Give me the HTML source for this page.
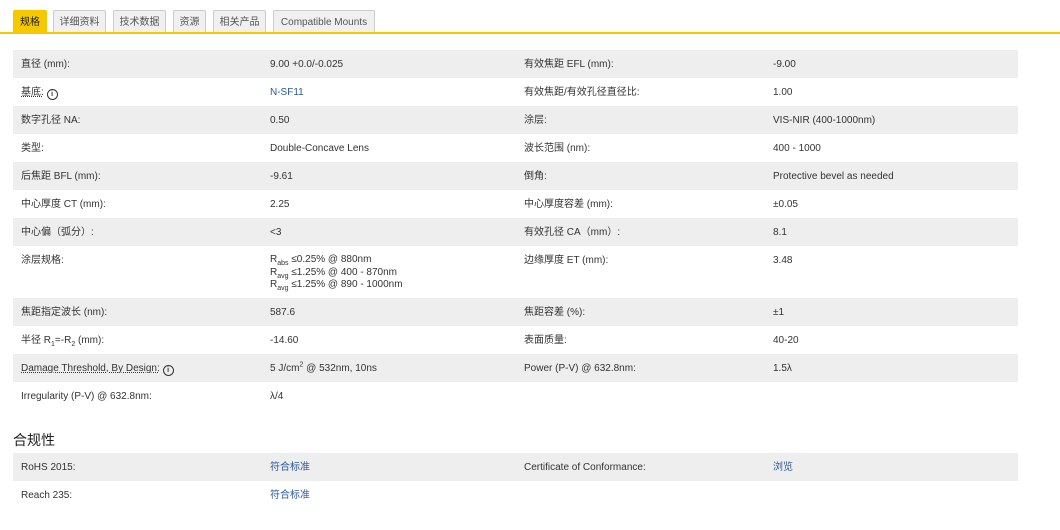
<!DOCTYPE html><html><head><meta charset="utf-8"><style>
body{margin:0;width:1060px;height:530px;background:#fff;font-family:"Liberation Sans","Noto Sans CJK SC",sans-serif;font-size:10px;color:#333;position:relative;overflow:hidden}
.tab{position:absolute;top:10px;height:22px;line-height:24px;font-size:10px;text-align:center;background:#f0f0f0;border:1px solid #ccc;border-bottom:none;color:#555;box-sizing:border-box;border-radius:2px 2px 0 0}
.line{position:absolute;left:0;top:32px;width:1060px;height:2px;background:#f5c800}
.r{position:absolute;left:13px;width:1005px;height:28px}
.g{background:#eee}
.c{position:absolute;top:1px;height:28px;line-height:28px;white-space:nowrap}
.a{left:8px}.b{left:257px}.d{left:511px}.e{left:760px}
a{color:#2a5a9a;text-decoration:none}
sub,sup{font-size:7px;line-height:0}
.i{display:inline-block;width:9px;height:9px;border:1.3px solid #333;border-radius:50%;font-size:7px;line-height:9px;text-align:center;font-weight:bold;vertical-align:-1px}
h2{position:absolute;left:13px;top:431px;margin:0;font-size:14px;font-weight:normal;color:#222;line-height:18px}
</style></head><body>
<div class="tab" style="left:13px;width:34px;background:#f5c800;border-color:#f5c800;color:#222">规格</div>
<div class="tab" style="left:53px;width:53px">详细资料</div>
<div class="tab" style="left:113px;width:53px">技术数据</div>
<div class="tab" style="left:173px;width:33px">资源</div>
<div class="tab" style="left:213px;width:53px">相关产品</div>
<div class="tab" style="left:273px;width:102px">Compatible Mounts</div>
<div class="line"></div>
<div class="r g" style="top:50px"><span class="c a">直径 (mm):</span><span class="c b">9.00 +0.0/-0.025</span><span class="c d">有效焦距 EFL (mm):</span><span class="c e">-9.00</span></div>
<div class="r" style="top:78px"><span class="c a"><u style="text-decoration-style:dotted">基底:</u> <span class="i">i</span></span><span class="c b"><a>N-SF11</a></span><span class="c d">有效焦距/有效孔径直径比:</span><span class="c e">1.00</span></div>
<div class="r g" style="top:106px"><span class="c a">数字孔径 NA:</span><span class="c b">0.50</span><span class="c d">涂层:</span><span class="c e">VIS-NIR (400-1000nm)</span></div>
<div class="r" style="top:134px"><span class="c a">类型:</span><span class="c b">Double-Concave Lens</span><span class="c d">波长范围 (nm):</span><span class="c e">400 - 1000</span></div>
<div class="r g" style="top:162px"><span class="c a">后焦距 BFL (mm):</span><span class="c b">-9.61</span><span class="c d">倒角:</span><span class="c e">Protective bevel as needed</span></div>
<div class="r" style="top:190px"><span class="c a">中心厚度 CT (mm):</span><span class="c b">2.25</span><span class="c d">中心厚度容差 (mm):</span><span class="c e">±0.05</span></div>
<div class="r g" style="top:218px"><span class="c a">中心偏（弧分）:</span><span class="c b">&lt;3</span><span class="c d">有效孔径 CA（mm）:</span><span class="c e">8.1</span></div>
<div class="r" style="top:246px;height:52px"><span class="c a">涂层规格:</span><span class="c b" style="line-height:12.5px;top:8px;height:auto">R<sub>abs</sub> ≤0.25% @ 880nm<br>R<sub>avg</sub> ≤1.25% @ 400 - 870nm<br>R<sub>avg</sub> ≤1.25% @ 890 - 1000nm</span><span class="c d">边缘厚度 ET (mm):</span><span class="c e">3.48</span></div>
<div class="r g" style="top:298px"><span class="c a">焦距指定波长 (nm):</span><span class="c b">587.6</span><span class="c d">焦距容差 (%):</span><span class="c e">±1</span></div>
<div class="r" style="top:326px"><span class="c a">半径 R<sub>1</sub>=-R<sub>2</sub> (mm):</span><span class="c b">-14.60</span><span class="c d">表面质量:</span><span class="c e">40-20</span></div>
<div class="r g" style="top:354px"><span class="c a"><u style="text-decoration-style:dotted">Damage Threshold, By Design:</u> <span class="i">i</span></span><span class="c b">5 J/cm<sup>2</sup> @ 532nm, 10ns</span><span class="c d">Power (P-V) @ 632.8nm:</span><span class="c e">1.5λ</span></div>
<div class="r" style="top:382px"><span class="c a">Irregularity (P-V) @ 632.8nm:</span><span class="c b">λ/4</span></div>
<h2>合规性</h2>
<div class="r g" style="top:453px"><span class="c a">RoHS 2015:</span><span class="c b"><a>符合标准</a></span><span class="c d">Certificate of Conformance:</span><span class="c e"><a>浏览</a></span></div>
<div class="r" style="top:481px"><span class="c a">Reach 235:</span><span class="c b"><a>符合标准</a></span></div>
</body></html>
